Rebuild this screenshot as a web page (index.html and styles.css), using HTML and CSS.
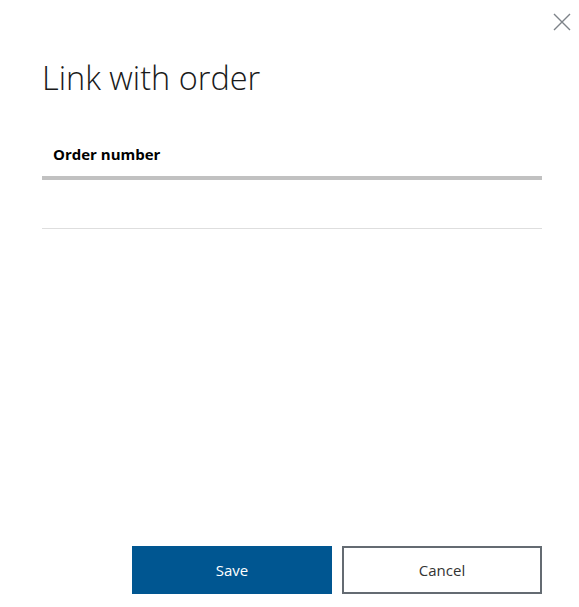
FILE: index.html
```html
<!DOCTYPE html>
<html>
<head>
<meta charset="utf-8">
<link rel="stylesheet" href="styles.css">
</head>
<body>
<div class="dialog">
  <button class="close" aria-label="Close">
    <svg width="18" height="18" viewBox="0 0 18 18"><path d="M1 1 L17 17 M17 1 L1 17" stroke="#7d8389" stroke-width="1.4" fill="none"/></svg>
  </button>
  <h1 class="title">Link with order</h1>
  <div class="field">
    <label class="field-label">Order number</label>
  </div>
  <div class="separator"></div>
  <div class="spacer"></div>
  <div class="actions">
    <button class="btn btn-primary">Save</button>
    <button class="btn btn-secondary">Cancel</button>
  </div>
</div>
</body>
</html>
```

FILE: styles.css
```css
html, body {
  margin: 0;
  padding: 0;
  background: #ffffff;
}
body {
  font-family: "Open Sans", "Liberation Sans", sans-serif;
  color: #000;
}
.dialog {
  position: relative;
  height: 607px;
  box-sizing: border-box;
  padding: 0 37px 13px 42px;
  display: flex;
  flex-direction: column;
}
.close {
  position: absolute;
  top: 13px;
  right: 8px;
  width: 18px;
  height: 18px;
  padding: 0;
  border: 0;
  background: none;
  display: flex;
}
.title {
  margin: 56px 0 0 0;
  font-size: 32.5px;
  font-weight: 300;
  line-height: 44px;
  color: #1a1a1a;
}
.field {
  margin-top: 43px;
  height: 33px;
  border-bottom: 4px solid #c1c1c1;
  box-sizing: content-box;
  padding-left: 11px;
}
.field-label {
  display: block;
  font-size: 15px;
  font-weight: 700;
  line-height: 22px;
  color: #000;
}
.separator {
  margin-top: 48px;
  height: 1px;
  background: #dedede;
}
.spacer {
  flex: 1;
}
.actions {
  display: flex;
  justify-content: flex-end;
  gap: 10px;
}
.btn {
  width: 200px;
  height: 48px;
  font-family: "Open Sans", "Liberation Sans", sans-serif;
  font-size: 15px;
  box-sizing: border-box;
  cursor: pointer;
}
.btn-primary {
  background: #005691;
  color: #fff;
  border: 0;
}
.btn-secondary {
  background: #fff;
  color: #333;
  border: 2px solid #646b72;
}
```
